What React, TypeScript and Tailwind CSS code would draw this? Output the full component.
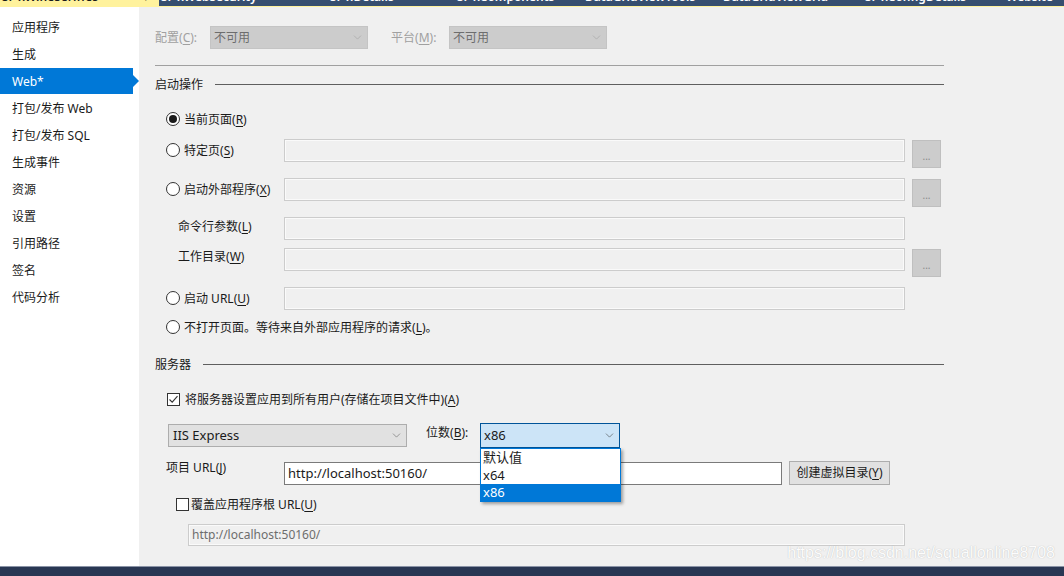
import { ChevronDown } from 'lucide-react'

const nav = ['应用程序', '生成', 'Web*', '打包/发布 Web', '打包/发布 SQL', '生成事件', '资源', '设置', '引用路径', '签名', '代码分析']

const tabs = [
    { label: 'SPT.WineSeriffes', w: 'w-[159px]', active: true },
    { label: 'SPT.WebSecurity', w: 'w-[169px]' },
    { label: 'SPT.Details', w: 'w-[127px]' },
    { label: 'SPT.Components', w: 'w-[128px]' },
    { label: 'DataGridViewTools', w: 'w-[138px]' },
    { label: 'DataGridViewGrid', w: 'w-[142px]' },
    { label: 'SPT.ConfigDetails', w: 'w-[141px]' },
    { label: 'Website', w: 'w-[60px]' },
]

function Key({ k }: { k: string }) {
    return <>(<span className="underline underline-offset-2">{k}</span>)</>
}

function Radio({ checked, children }: { checked?: boolean; children: React.ReactNode }) {
    return (
        <div className="flex items-center h-[16px] pl-[11px] gap-[4px]">
            <span className="w-[14px] h-[14px] rounded-full border border-[#333] bg-white flex items-center justify-center">
                {checked && <span className="w-[8px] h-[8px] rounded-full bg-[#1a1a1a]" />}
            </span>
            <span className="pt-[2px]">{children}</span>
        </div>
    )
}

function Box() {
    return <div className="w-[621px] h-[23px] border border-[#cccccc] shadow-[inset_0_0_0_1px_#fafafa] bg-[#f0f0f0]" />
}

function Dots() {
    return (
        <div className="w-[29px] h-[28px] mt-px ml-[7px] bg-[#cccccc] border border-[#bfbfbf] flex items-end justify-center pb-[6px] text-[10px] leading-none text-[#8a8a8a]">
            ...
        </div>
    )
}

function Heading({ title }: { title: string }) {
    return (
        <div className="flex items-center h-[16px] gap-[12px]">
            <span className="pt-[2px]">{title}</span>
            <div className="flex-1 h-px bg-[#5f5f5f]" />
        </div>
    )
}

export default function App() {
    return (
        <div className="w-[1064px] h-[576px] flex flex-col overflow-hidden bg-[#f0f0f0] text-[12px] text-[#1a1a1a] font-['Noto_Sans','Noto_Sans_CJK_SC',sans-serif]">
            {/* document tabs, only their lower edge is in view */}
            <div className="h-[6px] flex bg-[#364e6f] overflow-hidden">
                {tabs.map((t) => (
                    <div key={t.label} className={`${t.w} shrink-0 h-[6px] relative overflow-hidden ${t.active ? 'bg-[#fff29d] text-[#1a1a1a]' : 'text-white'}`}>
                        <span className="absolute left-[2px] -top-[10px] text-[12px] leading-[14px] font-semibold whitespace-nowrap">{t.label}</span>
                        {t.active && <span className="absolute left-[143px] -top-[10px] text-[11px] leading-[14px]">▾ ×</span>}
                    </div>
                ))}
            </div>
            <div className="h-px bg-[#fff29d]" />

            <div className="flex-1 flex min-h-0">
                <aside className="w-[139px] bg-white pt-[7px] shrink-0">
                    {nav.map((n) => (
                        <div key={n} className="relative h-[27px]">
                            <div className={`w-[133px] h-[26px] flex items-center pl-[12px] pt-px ${n === 'Web*' ? 'bg-[#0078d7] text-white' : ''}`}>{n}</div>
                            {n === 'Web*' && (
                                <span className="absolute left-[133px] top-[7px] w-0 h-0 border-y-[6px] border-y-transparent border-l-[6px] border-l-[#0078d7]" />
                            )}
                        </div>
                    ))}
                </aside>

                <main className="relative flex-1 pl-[16px] pt-[19px]">
                    <div className="w-[789px] flex flex-col">
                        <div className="flex items-center h-[23px] text-[#a0a0a0]">
                            <span className="w-[55px]">配置<Key k="C" />:</span>
                            <div className="w-[158px] h-[23px] bg-[#cccccc] border border-[#c4c4c4] flex items-center justify-between px-[3px] text-[#6d6d6d]">
                                不可用<ChevronDown size={13} strokeWidth={1} className="text-[#9a9a9a]" />
                            </div>
                            <span className="w-[58px] ml-[23px]">平台<Key k="M" />:</span>
                            <div className="w-[158px] h-[23px] bg-[#cccccc] border border-[#c4c4c4] flex items-center justify-between px-[3px] text-[#6d6d6d]">
                                不可用<ChevronDown size={13} strokeWidth={1} className="text-[#9a9a9a]" />
                            </div>
                        </div>

                        <div className="mt-[16px] h-px bg-[#a0a0a0]" />

                        <div className="mt-[10px]"><Heading title="启动操作" /></div>

                        <div className="mt-[19px]"><Radio checked>当前页面<Key k="R" /></Radio></div>

                        <div className="mt-[12px] flex h-[29px]">
                            <div className="w-[129px] h-[21px] flex items-center"><Radio>特定页<Key k="S" /></Radio></div>
                            <Box /><Dots />
                        </div>

                        <div className="mt-[10px] flex h-[29px]">
                            <div className="w-[129px] h-[21px] flex items-center"><Radio>启动外部程序<Key k="X" /></Radio></div>
                            <Box /><Dots />
                        </div>

                        <div className="mt-[10px] flex h-[23px]">
                            <div className="w-[129px] pl-[23px] flex items-center h-[20px]">命令行参数<Key k="L" /></div>
                            <Box />
                        </div>

                        <div className="mt-[8px] flex h-[29px]">
                            <div className="w-[129px] pl-[23px] flex items-center h-[17px]">工作目录<Key k="W" /></div>
                            <Box /><Dots />
                        </div>

                        <div className="mt-[10px] flex h-[23px]">
                            <div className="w-[129px] h-[21px] flex items-center"><Radio>启动 URL<Key k="U" /></Radio></div>
                            <Box />
                        </div>

                        <div className="mt-[9px]"><Radio>不打开页面。等待来自外部应用程序的请求<Key k="L" />。</Radio></div>

                        <div className="mt-[21px]"><Heading title="服务器" /></div>

                        <div className="mt-[19px] flex items-center h-[16px] pl-[12px] gap-[5px]">
                            <span className="w-[13px] h-[13px] border border-[#333] bg-white flex items-center justify-center">
                                <svg width="11" height="11" viewBox="0 0 11 11"><path d="M1.5 5.5 L4.2 8.2 L9.5 2.2" fill="none" stroke="#333" strokeWidth="1.1" /></svg>
                            </span>
                            <span className="pt-[2px]">将服务器设置应用到所有用户(存储在项目文件中)<Key k="A" /></span>
                        </div>

                        <div className="mt-[16px] flex h-[25px] pl-[13px]">
                            <div className="w-[239px] h-[23px] mt-px bg-[#e1e1e1] border border-[#adadad] flex items-center justify-between pl-[4px] pr-[3px] text-[13px]">
                                IIS Express<ChevronDown size={13} strokeWidth={1} className="text-[#555]" />
                            </div>
                            <span className="ml-[19px] w-[54px] h-[19px] flex items-center">位数<Key k="B" />:</span>
                            <div className="relative w-[140px] h-[25px] bg-[#cce4f7] border border-[#005499] flex items-center justify-between pl-[3px] pr-[3px] text-[13px]">
                                x86<ChevronDown size={13} strokeWidth={1} className="text-[#333]" />
                                <div className="absolute left-[-1px] top-[24px] w-[141px] bg-white border border-[#0078d7] shadow-[2px_2px_3px_rgba(0,0,0,0.35)] z-10 text-[13px] leading-[17px]">
                                    <div className="pl-[2px] h-[18px]">默认值</div>
                                    <div className="pl-[2px] h-[17px]">x64</div>
                                    <div className="pl-[2px] h-[17px] bg-[#0078d7] text-white">x86</div>
                                </div>
                            </div>
                        </div>

                        <div className="mt-[13px] flex h-[24px]">
                            <div className="w-[129px] pl-[11px] h-[14px] flex items-center">项目 URL<Key k="J" /></div>
                            <div className="w-[498px] h-[23px] mt-px bg-white border border-[#7a7a7a] flex items-center pl-[3px] text-[13px]">http://localhost:50160/</div>
                            <div className="ml-[7px] w-[101px] h-[24px] bg-[#e1e1e1] border border-[#adadad] flex items-center justify-center">创建虚拟目录<Key k="Y" /></div>
                        </div>

                        <div className="mt-[11px] flex items-center h-[16px] pl-[21px] gap-[2px]">
                            <span className="w-[13px] h-[13px] border border-[#333] bg-white" />
                            <span className="pt-[2px]">覆盖应用程序根 URL<Key k="U" /></span>
                        </div>

                        <div className="mt-[12px] ml-[33px] w-[717px] h-[22px] border border-[#cccccc] shadow-[inset_0_0_0_1px_#fafafa] flex items-center pl-[3px] text-[#6d6d6d]">
                            http://localhost:50160/
                        </div>
                    </div>

                    <span className="absolute right-[9px] bottom-[1px] text-[16px] text-white [text-shadow:0_0_1px_#a8a8a8] opacity-80 font-['Liberation_Sans',sans-serif]">https://blog.csdn.net/squallonline8708</span>
                </main>
            </div>

            <div className="h-px bg-[#8a93a6]" />
            <div className="h-[9px] bg-[#293753]" />
        </div>
    )
}
